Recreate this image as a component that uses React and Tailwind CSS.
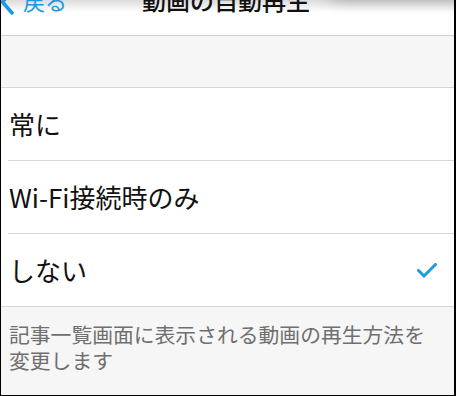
import React from 'react'

const font = { fontFamily: '"Noto Sans CJK JP", "Noto Sans", sans-serif' }

function Row({ label, checked, last }) {
  return (
    <div className={"flex items-center pl-[8px] pr-[17px] " + (last ? "h-[73px] border-b border-[#d6d6d6]" : "h-[72px]")}>
      <p className="flex-1 text-[26px] leading-[30px] text-[#111]">{label}</p>
      {checked && (
        <svg width="20" height="15" viewBox="0 0 20 15" className="mt-[1px]">
          <path d="M1.5 7.5 L7 13 L18.5 1.5" fill="none" stroke="#1e9ae6" strokeWidth="3" strokeLinecap="square" />
        </svg>
      )}
    </div>
  )
}

export default function App() {
  return (
    <div className="w-[456px] h-[396px] bg-white border-l border-r-2 border-b border-black overflow-hidden flex flex-col" style={font}>
      {/* nav bar */}
      <div className="relative h-[36px] shrink-0 overflow-hidden border-b border-[#cfcfcf] bg-[linear-gradient(to_bottom,#dcdcdc,#ffffff_12px)]">
        <div className="absolute -top-[30px] left-[325px] -right-[30px] h-[30px] rounded-full bg-white shadow-[0_0_16px_rgba(0,0,0,0.25)]" />
        <div className="relative flex items-center h-[30px] -mt-[15px]">
          <svg width="16" height="30" viewBox="0 0 16 30" className="-ml-[2px] shrink-0">
            <path d="M13 6 L3.5 17 L13 28" fill="none" stroke="#1a9ae4" strokeWidth="3.5" strokeLinecap="round" strokeLinejoin="round" />
          </svg>
          <span className="ml-[8px] text-[22px] leading-[30px] text-[#1a9ae4]">戻る</span>
          <span className="ml-[75px] text-[24px] leading-[30px] font-medium text-[#111]">動画の自動再生</span>
        </div>
      </div>

      <div className="h-[52px] shrink-0 bg-[#f6f6f6] border-b border-[#d6d6d6]" />

      <div className="shrink-0 bg-white">
        <Row label="常に" />
        <div className="ml-[7px] h-px bg-[#d9d9d9]" />
        <Row label="Wi-Fi接続時のみ" />
        <div className="ml-[7px] h-px bg-[#d9d9d9]" />
        <Row label="しない" checked last />
      </div>

      <div className="flex-1 bg-[#f6f6f6] pl-[8px] pr-[20px] pt-[14px]">
        <p className="text-[20.8px] leading-[26px] text-[#6f6f6f]">記事一覧画面に表示される動画の再生方法を変更します</p>
      </div>
    </div>
  )
}
